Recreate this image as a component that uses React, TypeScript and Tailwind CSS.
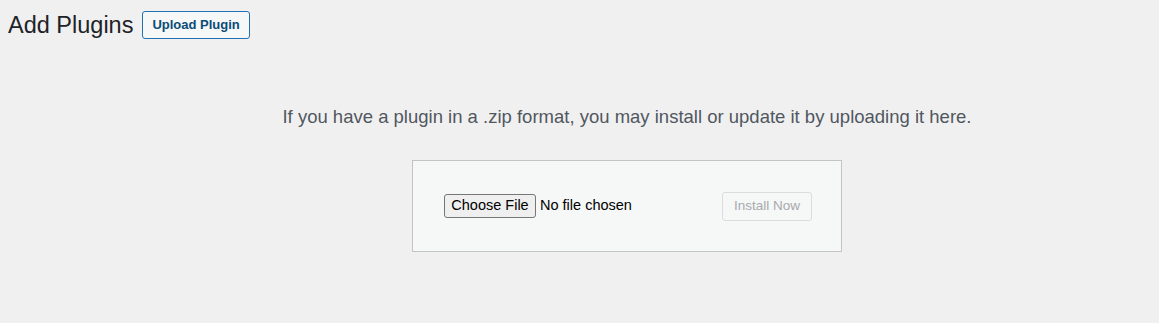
import React from 'react';

export default function App() {
  return (
    <div className="min-h-[323px] w-full bg-[#f0f0f1] font-['Liberation_Sans',Arial,sans-serif] text-[#1d2327]">
      <div className="flex items-center gap-[9px] pl-2 pt-[11px]">
        <h1 className="text-[23.5px] leading-[28px] font-normal">Add Plugins</h1>
        <button className="h-[28px] rounded-[3px] border border-[#2271b1] bg-[#f6f7f7] px-[9px] text-[13px] font-bold text-[#0a4b78]">
          Upload Plugin
        </button>
      </div>

      <div className="flex flex-col items-center pl-[95px]">
        <p className="mt-[67px] text-[18.5px] leading-[22px] text-[#50575e]">
          If you have a plugin in a .zip format, you may install or update it by uploading it here.
        </p>

        <form className="mt-[32px] flex h-[92px] w-[430px] items-center justify-between border border-[#c3c4c7] bg-[#f6f7f7] pl-[31px] pr-[29px]">
          <div className="flex items-center">
            <span className="flex h-[24px] w-[92px] items-center justify-center rounded-[3px] border border-[#767676] bg-[#efefef] text-[14.5px] text-black">
              Choose File
            </span>
            <span className="ml-[4px] text-[14.5px] text-black">No file chosen</span>
          </div>
          <button
            disabled
            className="h-[29px] rounded-[3px] border border-[#dcdcde] bg-[#f6f7f7] px-[11px] text-[13.5px] text-[#a7aaad]"
          >
            Install Now
          </button>
        </form>
      </div>
    </div>
  );
}
